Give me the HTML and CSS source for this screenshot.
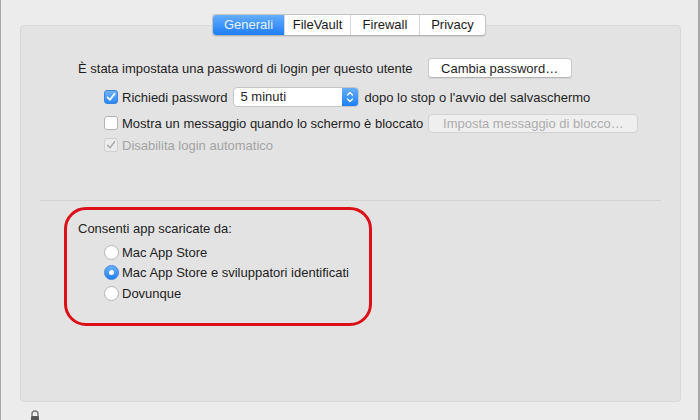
FILE: index.html
```html
<!DOCTYPE html>
<html lang="it">
<head>
<meta charset="utf-8">
<title>Sicurezza e Privacy</title>
<link rel="stylesheet" href="styles.css">
</head>
<body>
<div class="window">
  <div class="tabbar">
    <div class="tabs">
      <div class="tab active t1">Generali</div>
      <div class="tab t2">FileVault</div>
      <div class="tab t3">Firewall</div>
      <div class="tab t4">Privacy</div>
    </div>
  </div>
  <div class="panel">
    <div class="section top">
      <div class="row r1">
        <span class="label">È stata impostata una password di login per questo utente</span>
        <span class="button">Cambia password…</span>
      </div>
      <div class="row r2 indent">
        <span class="check checked"><svg viewBox="0 0 14 14" width="14" height="14"><path d="M3.5 7.3 L6 9.8 L10.6 3.8" fill="none" stroke="#fff" stroke-width="1.7" stroke-linecap="round" stroke-linejoin="round"/></svg></span>
        <span class="label">Richiedi password</span>
        <span class="popup"><span class="popup-text">5 minuti</span><span class="popup-arrows"><svg viewBox="0 0 16 20" width="16" height="20"><path d="M5.5 8 L8 5.5 L10.5 8 M5.5 12 L8 14.5 L10.5 12" fill="none" stroke="#fff" stroke-width="1.3" stroke-linecap="round" stroke-linejoin="round"/></svg></span></span>
        <span class="label">dopo lo stop o l'avvio del salvaschermo</span>
      </div>
      <div class="row r3 indent">
        <span class="check"></span>
        <span class="label">Mostra un messaggio quando lo schermo è bloccato</span>
        <span class="button disabled wide">Imposta messaggio di blocco…</span>
      </div>
      <div class="row r4 indent">
        <span class="check disabled-check"><svg viewBox="0 0 14 14" width="14" height="14"><path d="M3.5 7.3 L6 9.8 L10.6 3.8" fill="none" stroke="#a8a8a8" stroke-width="1.4" stroke-linecap="round" stroke-linejoin="round"/></svg></span>
        <span class="label dim">Disabilita login automatico</span>
      </div>
    </div>
    <div class="separator"></div>
    <div class="section bottom">
      <div class="row heading"><span class="label">Consenti app scaricate da:</span></div>
      <div class="row radio-row indent"><span class="radio"></span><span class="label">Mac App Store</span></div>
      <div class="row radio-row indent"><span class="radio on"></span><span class="label">Mac App Store e sviluppatori identificati</span></div>
      <div class="row radio-row indent"><span class="radio"></span><span class="label">Dovunque</span></div>
    </div>
    <div class="highlight"></div>
  </div>
  <div class="footer">
    <svg class="lock" viewBox="0 0 12 12" width="12" height="12"><path d="M3 6 V4 A3 3 0 0 1 9 4 V6" fill="none" stroke="#777" stroke-width="1.4"/><rect x="2" y="6" width="8" height="6" rx="1" fill="#555"/></svg>
  </div>
</div>
</body>
</html>
```
FILE: styles.css
```css
html, body {
  margin: 0;
  padding: 0;
}
body {
  width: 700px;
  height: 420px;
  overflow: hidden;
  background: #ececec;
  font-family: "Liberation Sans", Arial, sans-serif;
  font-size: 13px;
  color: #1e1e1e;
}
.window {
  box-sizing: border-box;
  width: 700px;
  height: 420px;
  border-left: 1px solid #a8a8a8;
  border-right: 2px solid #a8a8a8;
  padding-top: 14px;
  position: relative;
}
.tabbar {
  display: flex;
  justify-content: center;
  position: relative;
  z-index: 2;
  padding-right: 1px;
}
.tabs {
  display: flex;
  height: 20px;
  background: #fff;
  border: 1px solid #c4c4c4;
  border-bottom-color: #b4b4b4;
  border-radius: 4px;
  box-shadow: 0 1px 1px rgba(0,0,0,0.08);
  overflow: hidden;
}
.tab {
  display: flex;
  align-items: center;
  justify-content: center;
  box-sizing: border-box;
  line-height: 20px;
  border-left: 1px solid #d6d6d6;
  color: #1a1a1a;
  white-space: nowrap;
}
.tab:first-child { border-left: none; }
.t1 { width: 71px; }
.t2 { width: 66px; }
.t3 { width: 69px; }
.t4 { width: 66px; }
.tab.active {
  background: linear-gradient(#64aefc, #1e7ef5);
  color: #e8f2ff;
}
.panel {
  position: relative;
  box-sizing: border-box;
  margin: -11px 0 0 19px;
  width: 661px;
  height: 377px;
  background: #e3e3e3;
  border: 1px solid #d8d8d8;
  border-radius: 4px;
  padding: 32px 19px 0 19px;
}
.section {
  padding-left: 38px;
}
.row {
  display: flex;
  align-items: center;
  gap: 6px;
}
.indent { padding-left: 26px; }
.r1 { height: 20px; gap: 15px; }
.r2 { height: 20px; margin-top: 9px; gap: 3px; }
.r2 .popup { margin-left: 2px; margin-right: 3px; }
.r3 { height: 20px; margin-top: 6px; gap: 3px; }
.r3 .button { margin-left: 2px; }
.r4 { height: 16px; margin-top: 4px; gap: 3px; }
.label { white-space: nowrap; }
.dim { color: #a4a4a4; }
.button {
  display: inline-flex;
  align-items: center;
  justify-content: center;
  box-sizing: border-box;
  height: 20px;
  padding: 0 13px;
  background: #fff;
  border: 1px solid #c9c9c9;
  border-bottom-color: #b5b5b5;
  border-radius: 4px;
  box-shadow: 0 1px 0 rgba(0,0,0,0.05);
  white-space: nowrap;
  width: 144px;
}
.button.disabled {
  background: #efefef;
  color: #acacac;
  border-color: #d2d2d2;
  box-shadow: none;
  height: 19px;
}
.button.wide { width: 210px; }
.check {
  box-sizing: border-box;
  width: 14px;
  height: 14px;
  border-radius: 3px;
  background: #fff;
  border: 1px solid #b3b3b3;
  display: inline-flex;
  flex: none;
  margin-right: 1px;
}
.check svg { margin: -1px; }
.check.checked {
  background: linear-gradient(#6cb3fb, #2c87f5);
  border-color: #3a84e0;
}
.check.disabled-check {
  background: #ececec;
  border-color: #cfcfcf;
}
.popup {
  display: inline-flex;
  box-sizing: border-box;
  width: 126px;
  height: 20px;
  background: #fff;
  border: 1px solid #c6c6c6;
  border-radius: 4px;
  overflow: hidden;
}
.popup-text {
  flex: 1;
  padding-left: 7px;
  line-height: 18px;
}
.popup-arrows {
  width: 16px;
  background: linear-gradient(#66aefc, #1f7ff5);
  display: flex;
  align-items: center;
}
.popup-arrows svg { margin-top: -1px; }
.separator {
  height: 1px;
  background: #d2d2d2;
  margin-top: 47px;
  width: 621px;
}
.bottom { padding-top: 18px; }
.heading { height: 18px; }
.radio-row { height: 20px; gap: 3px; margin-top: 0.5px; }
.heading + .radio-row { margin-top: 5px; }
.radio {
  box-sizing: border-box;
  width: 15px;
  height: 15px;
  border-radius: 50%;
  background: #fff;
  border: 1px solid #b5b5b5;
  flex: none;
  display: inline-flex;
  align-items: center;
  justify-content: center;
}
.radio.on {
  background: linear-gradient(#6ab2fc, #247ff4);
  border-color: #3a84e0;
}
.radio.on::after {
  content: "";
  width: 5px;
  height: 5px;
  border-radius: 50%;
  background: #fff;
}
.highlight {
  position: absolute;
  left: 43px;
  top: 181px;
  width: 308px;
  height: 119px;
  box-sizing: border-box;
  border: 3px solid #dc1018;
  border-radius: 22px;
  pointer-events: none;
}
.footer {
  padding: 8px 0 0 28px;
}
.lock { display: block; }
```
